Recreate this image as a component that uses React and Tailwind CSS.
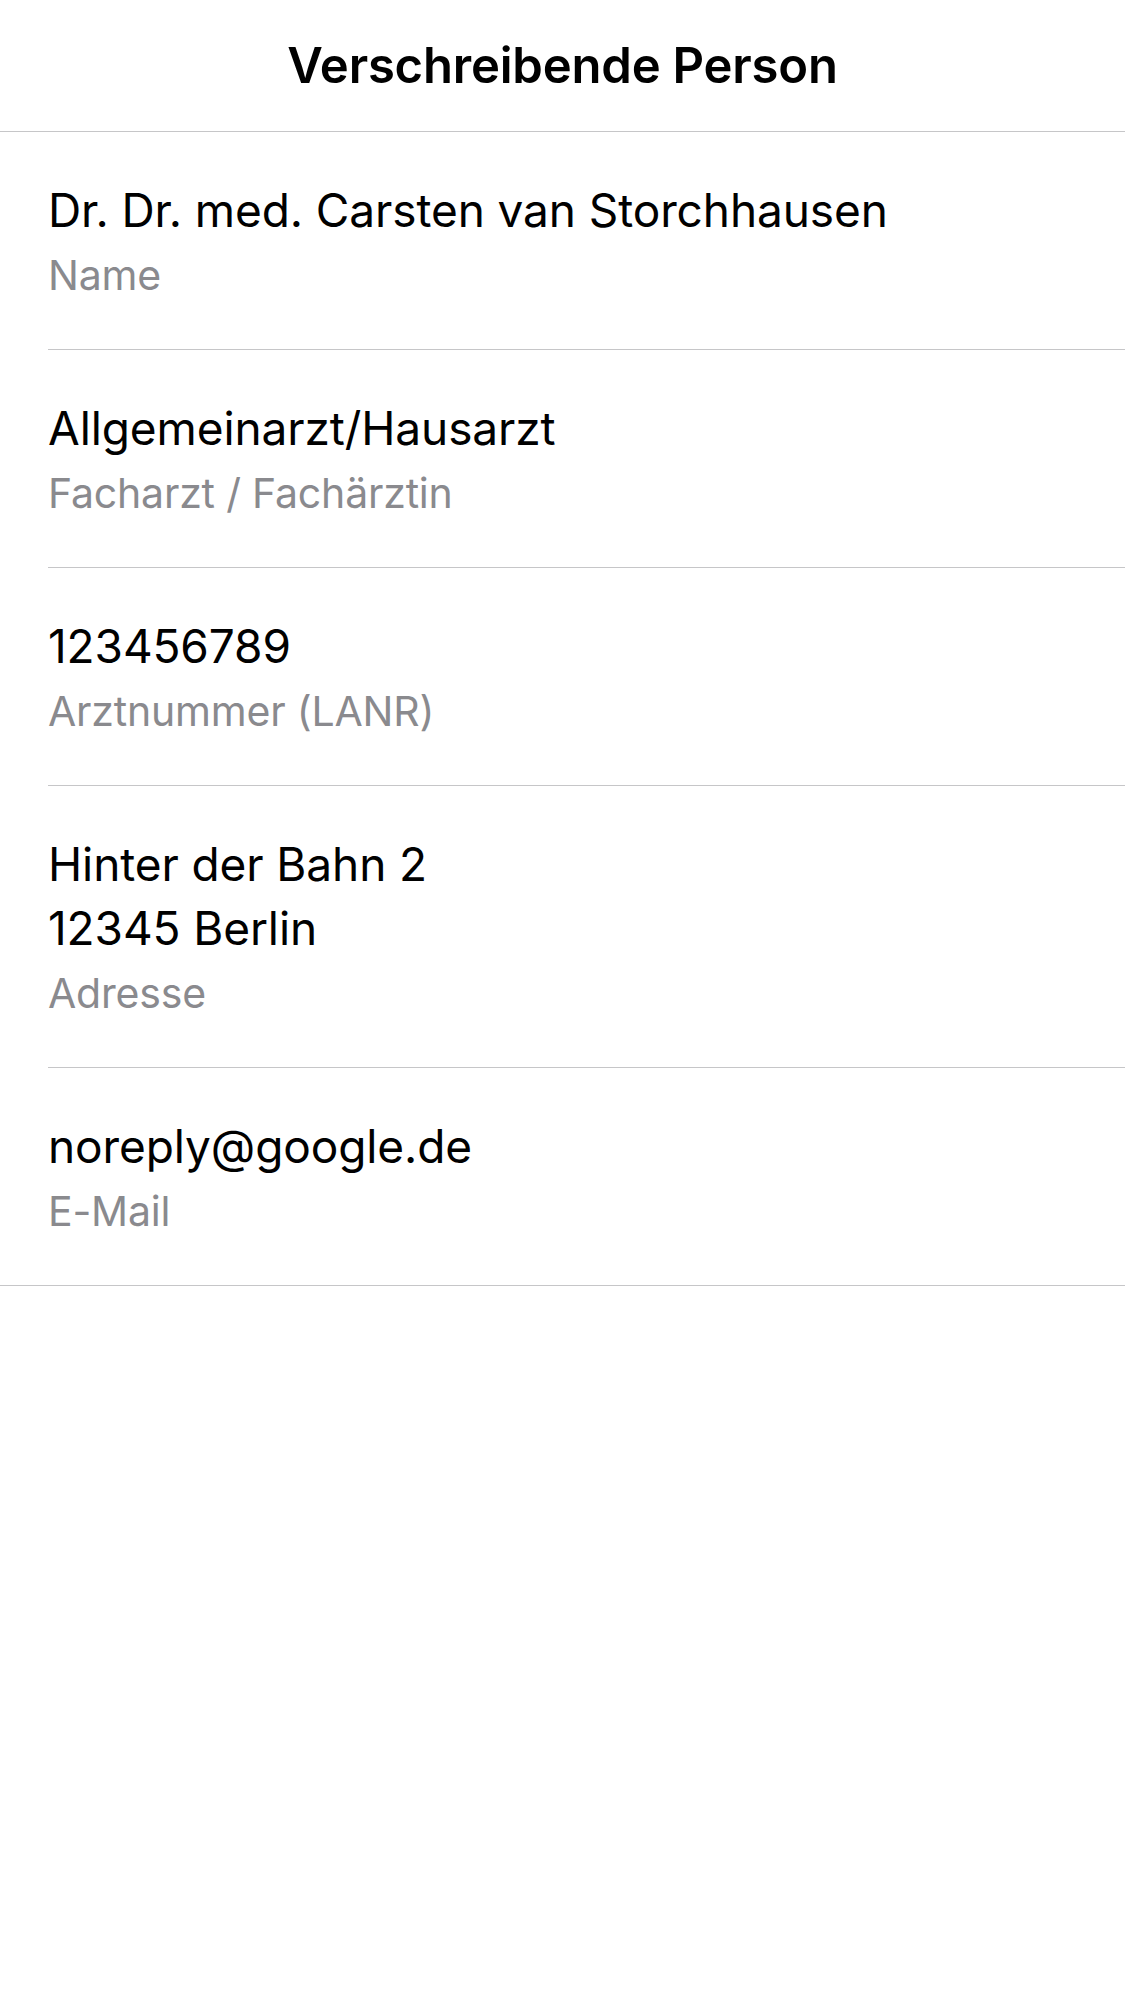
import React from 'react';

const fields = [
  { value: ['Dr. Dr. med. Carsten van Storchhausen'], label: 'Name' },
  { value: ['Allgemeinarzt/Hausarzt'], label: 'Facharzt / Fachärztin' },
  { value: ['123456789'], label: 'Arztnummer (LANR)' },
  { value: ['Hinter der Bahn 2', '12345 Berlin'], label: 'Adresse' },
  { value: ['noreply@google.de'], label: 'E-Mail' },
];

function FieldRow({ value, label, last }) {
  return (
    <div className={last ? 'border-b border-[#c6c6c8]' : ''}>
      <div className={`ml-[48px] pt-[46px] pb-[40px] ${last ? '' : 'border-b border-[#c6c6c8]'}`}>
        {value.map((line) => (
          <div key={line} className="text-[46px] leading-[64px] text-black tracking-[-0.1px]">
            {line}
          </div>
        ))}
        <div className="text-[41px] leading-[67px] text-[#8a8a8e] tracking-[-0.2px]">{label}</div>
      </div>
    </div>
  );
}

export default function App() {
  return (
    <div className="min-h-[2001px] w-[1125px] bg-white font-['Inter',sans-serif]">
      {/* Navigationsleiste */}
      <div className="h-[132px] flex items-center justify-center border-b border-[#c6c6c8]">
        <h1 className="text-[49px] font-semibold text-black tracking-[-0.2px]">Verschreibende Person</h1>
      </div>
      {/* Felder */}
      {fields.map((f, i) => (
        <FieldRow key={f.label} value={f.value} label={f.label} last={i === fields.length - 1} />
      ))}
    </div>
  );
}
